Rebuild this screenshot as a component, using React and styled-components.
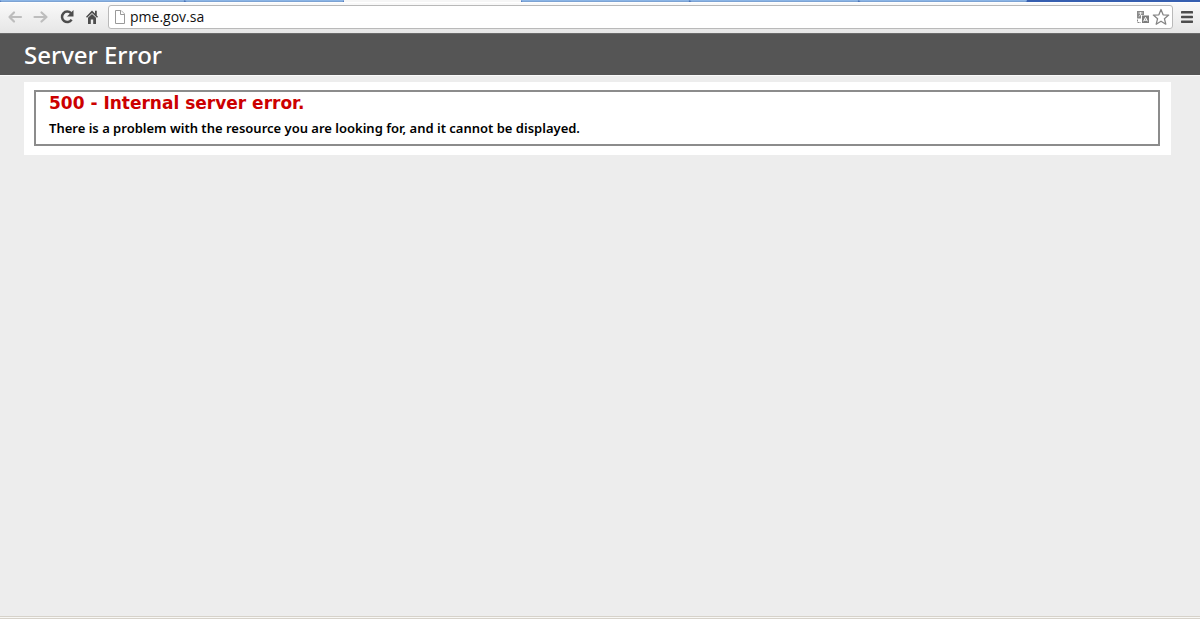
import styled, { createGlobalStyle } from 'styled-components';

const GlobalStyle = createGlobalStyle`
  * {
    box-sizing: border-box;
  }
  body {
    margin: 0;
    background: #ededed;
    color: #000;
    font-family: Verdana, "DejaVu Sans", sans-serif;
  }
  svg {
    display: block;
  }
`

const Window = styled.div`
  display: flex;
  flex-direction: column;
  min-height: 100vh;
`

const TabStrip = styled.div`
  display: flex;
  height: 2px;
  background: #365fb0;
`

const Tab = styled.div`
  flex: ${props => props.$grow} 1 0;
  background: ${props => props.$active ? '#f6f6f6' : '#8bb5e6'};
  border-bottom: ${props => props.$active ? 'none' : '1px solid #7da3d3'};
  border-right: ${props => props.$divided ? '1px solid #6f93c4' : 'none'};
  border-radius: ${props => props.$active ? '0' : '0 0 2px 2px'};
`

const EmptyStrip = styled.div`
  flex: 173 1 0;
`

const Toolbar = styled.div`
  display: flex;
  align-items: center;
  gap: 7px;
  height: 31px;
  padding: 0 6px 2px;
  background: linear-gradient(#f9f9f9, #e6e6e6);
  border-top: 1px solid #fff;
`

const NavButtons = styled.div`
  display: flex;
  gap: 8px;
  margin-right: -1px;
`

const IconButton = styled.button`
  display: flex;
  padding: 0;
  border: none;
  background: none;
  color: ${props => props.$color || '#4d4d4d'};
`

const AddressBar = styled.div`
  flex: 1;
  display: flex;
  align-items: center;
  gap: 2px;
  height: 24px;
  padding: 0 2px 0 3px;
  background: #fff;
  border: 1px solid #b9b9b9;
  border-radius: 3px;
`

const AddressInput = styled.input`
  flex: 1;
  min-width: 0;
  padding: 0 0 2px;
  border: none;
  outline: none;
  background: none;
  color: #111;
  font: 14px "Open Sans", sans-serif;
`

const Header = styled.header`
  padding: 6px 24px;
  background: #555;
  border-top: 1px solid #6b6b6b;
  border-bottom: 1px solid #fafafa;
`

const SiteTitle = styled.h1`
  margin: 0;
  color: #fff;
  font: 500 24px/29px "Trebuchet MS", "Noto Sans", sans-serif;
`

const Content = styled.main`
  flex: 1;
  padding: 6px 29px 0 24px;
`

const Card = styled.div`
  padding: 8px 11px 9px 10px;
  background: #fff;
`

const ErrorBox = styled.section`
  padding: 0 13px 8px;
  border: 2px solid #8c8c8c;
`

const ErrorTitle = styled.h2`
  margin: 0 0 6px;
  color: #c00;
  font-size: 17px;
  line-height: 22px;
`

const ErrorText = styled.h3`
  margin: 0;
  font: 600 13px/16px "Noto Sans", sans-serif;
`

const StatusEdge = styled.footer`
  height: 3px;
  background: #f8f7f4;
  border-top: 1px solid #d6d2ca;
  border-bottom: 1px solid #d6d2ca;
`

const ArrowIcon = ({ flip }) => (
  <svg width="18" height="18" viewBox="0 0 18 18" fill="none" stroke="currentColor" strokeWidth="2.2" strokeLinecap="round" strokeLinejoin="round">
    <path d={flip ? 'M2.5 9H14M9.5 4.5L14.5 9L9.5 13.5' : 'M15 9H4M8 4.5L3.5 9L8 13.5'} />
  </svg>
)

const ReloadIcon = () => (
  <svg width="18" height="18" viewBox="0 0 18 18">
    <path d="M13 5.2A5.2 5.2 0 1 0 13.6 11.6" fill="none" stroke="currentColor" strokeWidth="2.5" />
    <path d="M15.5 2V8.5H9Z" fill="currentColor" />
  </svg>
)

const HomeIcon = () => (
  <svg width="18" height="18" viewBox="0 0 18 18" fill="currentColor">
    <path d="M8 2.5L2 8.7L3 9.7L8 4.9L13 9.7L14 8.7L12.8 7.4V2.8H11V5.6Z" />
    <path d="M8 5.9L4 9.7V16H6.8V11.5H9.2V16H12V9.7Z" />
  </svg>
)

const PageIcon = () => (
  <svg width="16" height="16" viewBox="0 0 16 16" fill="#fff" stroke="#999">
    <path d="M3.5 1.5H9L12.5 5V14.5H3.5Z" />
    <path d="M8.5 1.5V5.5H12.5" />
  </svg>
)

const TranslateIcon = () => (
  <svg width="14" height="14" viewBox="0 0 14 14">
    <path d="M1 1H8V5H5V8.5H1Z" fill="#8a8a8a" />
    <path d="M2.5 3H6.5M4.5 2V4M3 6.5L5 4" stroke="#eee" fill="none" />
    <rect x="6" y="5.5" width="7" height="7.5" fill="#7d7d7d" />
    <path d="M7.6 11.3L9.5 7.3L11.4 11.3M8.2 10.2H10.8" stroke="#fff" fill="none" />
    <path d="M1.5 9.5V12.5H5" stroke="#858585" strokeDasharray="2 1" fill="none" />
  </svg>
)

const StarIcon = () => (
  <svg width="18" height="18" viewBox="0 0 18 18" fill="#fff" stroke="#858585" strokeWidth="1.3" strokeLinejoin="round">
    <path d="M9 1.5L11.1 6.8L16.7 7.1L12.4 10.7L13.8 16.2L9 13.2L4.2 16.2L5.6 10.7L1.3 7.1L6.9 6.8Z" />
  </svg>
)

const MenuIcon = () => (
  <svg width="14" height="14" viewBox="0 0 14 14" fill="currentColor">
    <rect x="1" y="1" width="12" height="2.5" rx="0.6" />
    <rect x="1" y="5.7" width="12" height="2.5" rx="0.6" />
    <rect x="1" y="10.4" width="12" height="2.5" rx="0.6" />
  </svg>
)

const App = () => {
  return (
    <>
      <GlobalStyle />
      <Window>
        <TabStrip>
          <Tab $grow={184} $divided />
          <Tab $grow={160} />
          <Tab $grow={177} $active />
          <Tab $grow={169} $divided />
          <Tab $grow={168} $divided />
          <Tab $grow={169} />
          <EmptyStrip />
        </TabStrip>
        <Toolbar>
          <NavButtons>
            <IconButton $color="#bdbdbd" aria-label="Back"><ArrowIcon /></IconButton>
            <IconButton $color="#bdbdbd" aria-label="Forward"><ArrowIcon flip /></IconButton>
            <IconButton aria-label="Reload"><ReloadIcon /></IconButton>
            <IconButton aria-label="Home"><HomeIcon /></IconButton>
          </NavButtons>
          <AddressBar>
            <PageIcon />
            <AddressInput aria-label="Address" defaultValue="pme.gov.sa" />
            <IconButton aria-label="Translate this page"><TranslateIcon /></IconButton>
            <IconButton aria-label="Bookmark this page"><StarIcon /></IconButton>
          </AddressBar>
          <IconButton aria-label="Menu"><MenuIcon /></IconButton>
        </Toolbar>
        <Header>
          <SiteTitle>Server Error</SiteTitle>
        </Header>
        <Content>
          <Card>
            <ErrorBox>
              <ErrorTitle>500 - Internal server error.</ErrorTitle>
              <ErrorText>There is a problem with the resource you are looking for, and it cannot be displayed.</ErrorText>
            </ErrorBox>
          </Card>
        </Content>
        <StatusEdge />
      </Window>
    </>
  );
}

export default App;
